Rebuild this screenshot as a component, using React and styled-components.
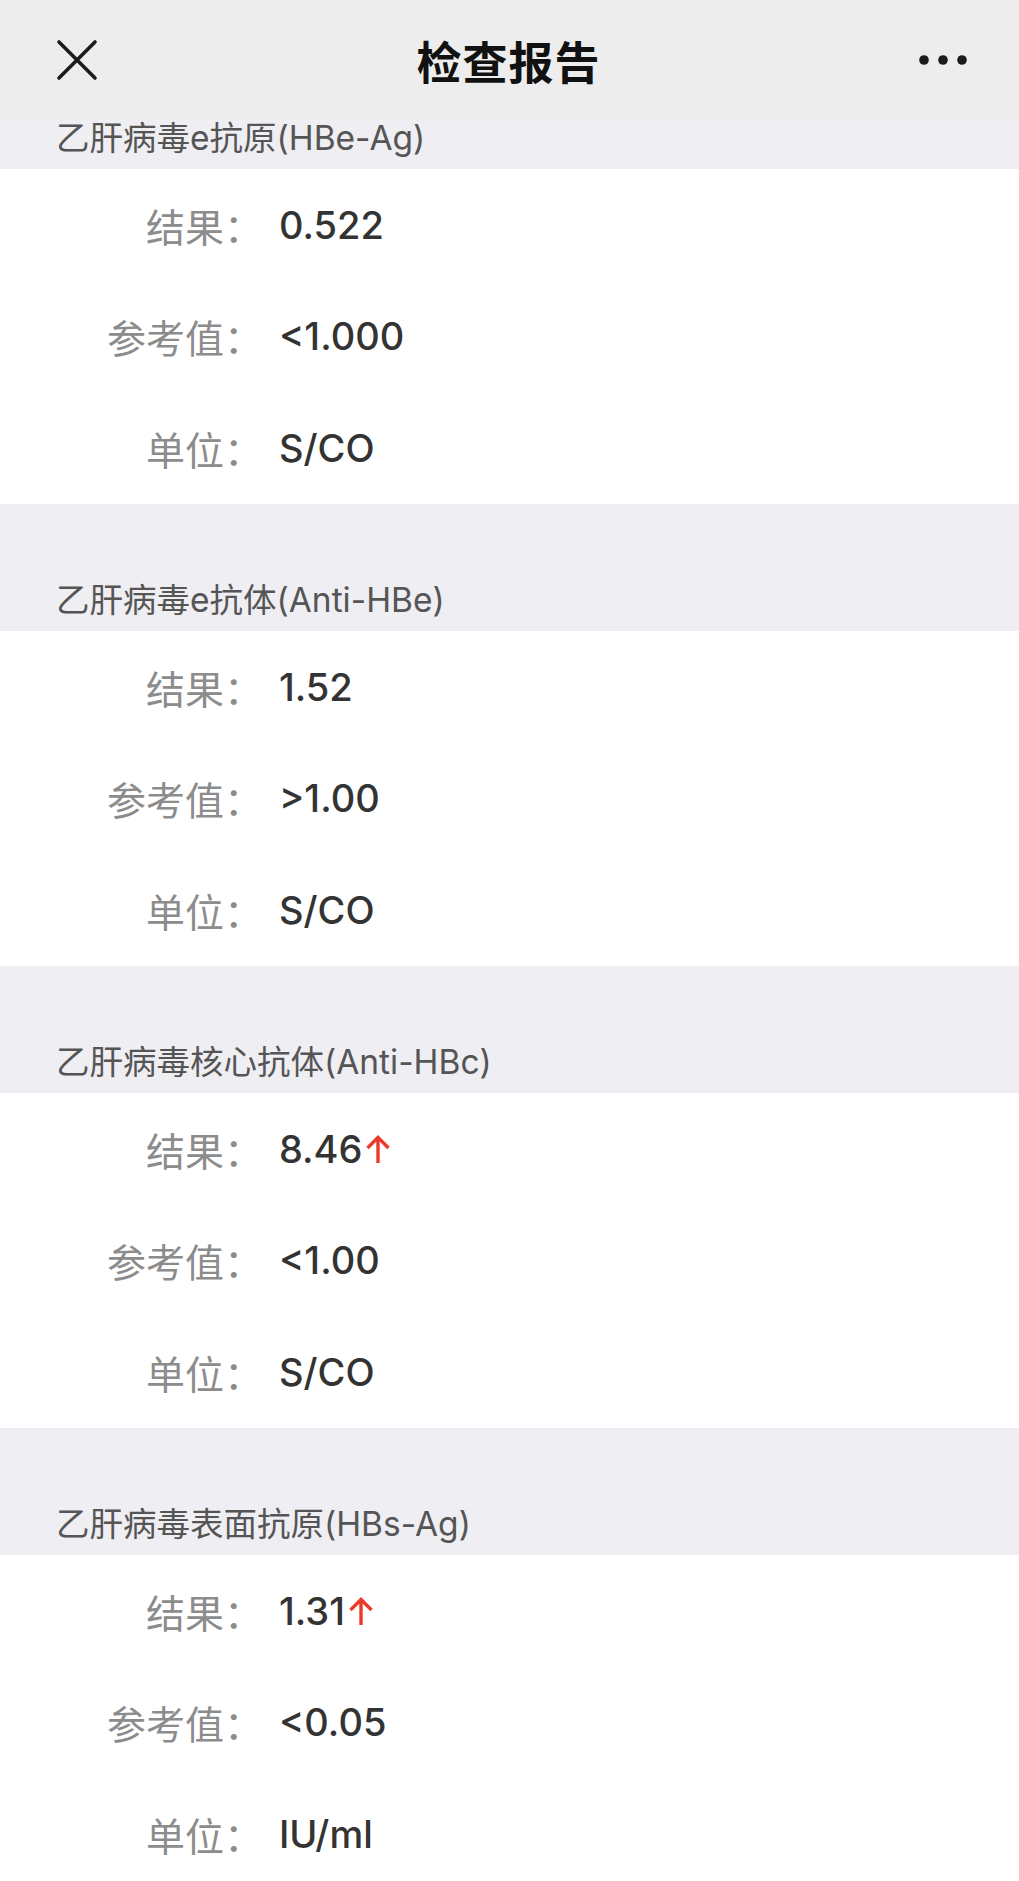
import React from "react";
import styled, { createGlobalStyle } from "styled-components";

const GlobalStyle = createGlobalStyle`
  html, body {
    margin: 0;
    padding: 0;
    background: #ffffff;
  }
  body {
    font-family: Inter, "Noto Sans CJK SC", sans-serif;
  }
`;

const Page = styled.div`
  width: 1019px;
  height: 1881px;
  display: flex;
  flex-direction: column;
  overflow: hidden;
  background: #ffffff;
`;

const NavBar = styled.header`
  height: 120px;
  flex-shrink: 0;
  background: #ededed;
  display: flex;
  align-items: center;
  justify-content: space-between;
  padding: 0 52px 0 56px;
  position: relative;
  z-index: 1;
`;

const NavTitle = styled.h1`
  margin: 0;
  font-family: "Noto Sans CJK SC", sans-serif;
  font-size: 45px;
  font-weight: 700;
  color: #111111;
  letter-spacing: 1px;
`;

const IconButton = styled.div`
  width: ${(p) => p.w}px;
  height: 42px;
  display: flex;
  align-items: center;
  justify-content: center;
`;

const Scroller = styled.main`
  flex: 1;
  overflow: hidden;
`;

const List = styled.div`
  margin-top: -78px;
`;

const Band = styled.div`
  height: 127px;
  box-sizing: border-box;
  background: #efeef3;
  display: flex;
  align-items: flex-end;
  padding: 0 56px 15px;
`;

const BandTitle = styled.div`
  font-family: Inter, "Noto Sans CJK SC", sans-serif;
  font-size: 33.5px;
  line-height: 32px;
  color: #555555;
`;

const Row = styled.div`
  height: 111.67px;
  display: grid;
  grid-template-columns: 263px auto;
  column-gap: 16px;
  align-items: center;
  background: #ffffff;
`;

const Label = styled.div`
  text-align: right;
  font-family: "Noto Sans CJK SC", sans-serif;
  font-size: 39px;
  color: #8c8c8c;
`;

const Value = styled.div`
  display: flex;
  align-items: center;
  font-family: Inter, "Noto Sans", sans-serif;
  font-size: 38px;
  font-weight: 500;
  color: #333333;
`;

const Up = styled.svg`
  margin-left: 3px;
  margin-top: 1px;
`;

function CloseIcon() {
  return (
    <svg width="42" height="42" viewBox="0 0 42 42">
      <path d="M3 3 L39 39 M39 3 L3 39" stroke="#1c1c1c" strokeWidth="3.6" strokeLinecap="round" fill="none" />
    </svg>
  );
}

function MoreIcon() {
  return (
    <svg width="48" height="12" viewBox="0 0 48 12">
      <circle cx="5" cy="6" r="4.8" fill="#1c1c1c" />
      <circle cx="24" cy="6" r="4.8" fill="#1c1c1c" />
      <circle cx="43" cy="6" r="4.8" fill="#1c1c1c" />
    </svg>
  );
}

function UpArrow() {
  return (
    <Up width="26" height="29" viewBox="0 0 26 29">
      <path d="M13 28 V2.5 M2.5 13 L13 2.5 L23.5 13" stroke="#eb3a2c" strokeWidth="3.4" fill="none" strokeLinejoin="miter" />
    </Up>
  );
}

const sections = [
  {
    title: "乙肝病毒e抗原(HBe-Ag)",
    rows: [
      ["结果", "0.522"],
      ["参考值", "<1.000"],
      ["单位", "S/CO"],
    ],
  },
  {
    title: "乙肝病毒e抗体(Anti-HBe)",
    rows: [
      ["结果", "1.52"],
      ["参考值", ">1.00"],
      ["单位", "S/CO"],
    ],
  },
  {
    title: "乙肝病毒核心抗体(Anti-HBc)",
    rows: [
      ["结果", "8.46", true],
      ["参考值", "<1.00"],
      ["单位", "S/CO"],
    ],
  },
  {
    title: "乙肝病毒表面抗原(HBs-Ag)",
    rows: [
      ["结果", "1.31", true],
      ["参考值", "<0.05"],
      ["单位", "IU/ml"],
    ],
  },
];

export default function App() {
  return (
    <>
      <GlobalStyle />
      <Page>
        <NavBar>
          <IconButton w={42}>
            <CloseIcon />
          </IconButton>
          <NavTitle>检查报告</NavTitle>
          <IconButton w={48}>
            <MoreIcon />
          </IconButton>
        </NavBar>
        <Scroller>
          <List>
            {sections.map((s) => (
              <section key={s.title}>
                <Band>
                  <BandTitle>{s.title}</BandTitle>
                </Band>
                {s.rows.map(([label, value, high]) => (
                  <Row key={label}>
                    <Label>{label}：</Label>
                    <Value>
                      {value}
                      {high && <UpArrow />}
                    </Value>
                  </Row>
                ))}
              </section>
            ))}
          </List>
        </Scroller>
      </Page>
    </>
  );
}
